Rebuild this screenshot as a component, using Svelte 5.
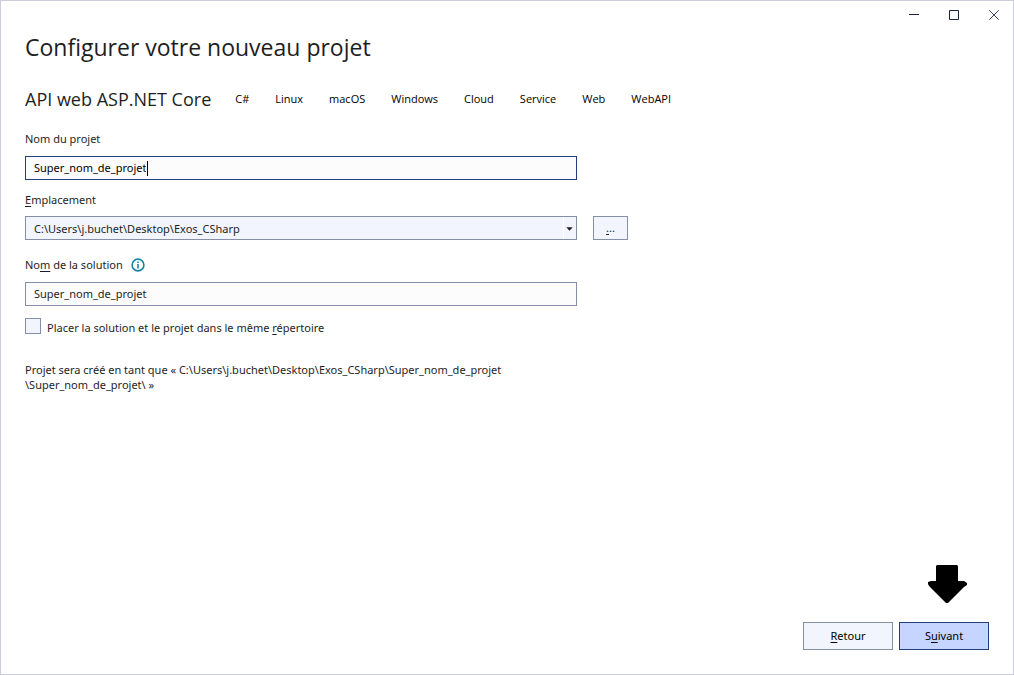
<script>
  const tags = ['C#', 'Linux', 'macOS', 'Windows', 'Cloud', 'Service', 'Web', 'WebAPI'];
  const location = 'C:\\Users\\j.buchet\\Desktop\\Exos_CSharp';
  let projectName = $state('Super_nom_de_projet');
  let solutionName = $state('Super_nom_de_projet');
  let sameDirectory = $state(false);
</script>

<div class="window">
  <header class="titlebar">
    <button type="button" aria-label="Réduire">
      <svg width="12" height="12" viewBox="-1 0 12 12"><path d="M0 5.5H10" /></svg>
    </button>
    <button type="button" aria-label="Agrandir">
      <svg width="12" height="12" viewBox="-1 0 12 12"><path d="M0.5 1.5H9.5V10.5H0.5Z" /></svg>
    </button>
    <button type="button" aria-label="Fermer">
      <svg class="close" width="12" height="12" viewBox="-1 0 12 12"><path d="M0.2 1.2L9.8 10.8M9.8 1.2L0.2 10.8" /></svg>
    </button>
  </header>

  <main>
    <h1>Configurer votre nouveau projet</h1>

    <div class="template">
      <h2>API web ASP.NET Core</h2>
      <ul>
        {#each tags as tag}
          <li>{tag}</li>
        {/each}
      </ul>
    </div>

    <form>
      <label class="caption" for="project">Nom du projet</label>
      <div class="box active">
        <input id="project" class="grow" type="text" spellcheck="false" bind:value={projectName} />
        <span class="caret"></span>
      </div>

      <label class="caption second" for="location"><u>E</u>mplacement</label>
      <div class="row">
        <div class="combo">
          <select id="location">
            <option>{location}</option>
          </select>
          <svg class="chevron" width="7" height="4" viewBox="0 0 7 4"><path d="M0.3 0.3H6.7L3.5 3.7Z" /></svg>
        </div>
        <button type="button" class="browse" aria-label="Parcourir"><u>.</u>..</button>
      </div>

      <div class="caption third">
        <label for="solution">No<u>m</u> de la solution</label>
        <svg class="info" width="14" height="14" viewBox="0 0 14 14">
          <circle cx="7" cy="7" r="5.9" />
          <path d="M7 6V10.6M7 3.4V5" />
        </svg>
      </div>
      <div class="box">
        <input id="solution" type="text" spellcheck="false" bind:value={solutionName} />
      </div>

      <label class="check">
        <input type="checkbox" bind:checked={sameDirectory} />
        <span>Placer la solution et le projet dans le même <u>r</u>épertoire</span>
      </label>

      <p>Projet sera créé en tant que « {location}\{projectName}<wbr />\{solutionName}\ »</p>
    </form>
  </main>

  <footer>
    <svg class="arrow" width="40" height="40" viewBox="0 0 40 40">
      <path d="M10 1H30L31 2V17H37L40 19V21L37 23L21 39H19L2 22L1 20V18L4 17H9V2Z" />
    </svg>
    <div class="actions">
      <button type="button"><u>R</u>etour</button>
      <button type="button" class="primary">S<u>u</u>ivant</button>
    </div>
  </footer>
</div>

<style>
  :global(body) {
    margin: 0;
    background: #fff;
  }

  .window,
  .window * {
    box-sizing: border-box;
  }

  .window {
    display: flex;
    flex-direction: column;
    min-height: 100vh;
    border: 1px solid #ccccdc;
    background: #fff;
    color: #1e1e1e;
    font: 11px/16px "Noto Sans", "Open Sans", sans-serif;
  }

  button,
  input,
  select {
    font: inherit;
    color: inherit;
    margin: 0;
    padding: 0;
  }

  u {
    text-decoration-thickness: 1px;
    text-underline-offset: 2px;
    text-decoration-skip-ink: none;
  }

  .titlebar {
    display: flex;
    justify-content: flex-end;
  }

  .titlebar button {
    display: flex;
    align-items: center;
    justify-content: center;
    width: 40px;
    height: 28px;
    border: 0;
    background: none;
  }

  .titlebar svg {
    fill: none;
    stroke: #17233f;
    overflow: visible;
    margin-left: 2px;
  }

  .titlebar .close {
    stroke: #3c465c;
  }

  main {
    flex: 1;
    padding: 0 24px;
  }

  h1,
  h2,
  ul,
  p {
    margin: 0;
    font-weight: 400;
  }

  h1,
  .template {
    font-family: "Open Sans", "Noto Sans", sans-serif;
  }

  h1 {
    padding-top: 2px;
    font-size: 23px;
    line-height: 32px;
  }

  .template {
    display: flex;
    align-items: center;
    gap: 24px;
    padding-top: 24px;
  }

  h2 {
    font-size: 18px;
    line-height: 24px;
  }

  ul {
    display: flex;
    gap: 26px;
    padding: 0;
    list-style: none;
    color: #000;
  }

  form {
    max-width: 603px;
    padding-top: 20px;
  }

  .caption {
    display: flex;
    align-items: center;
    gap: 8px;
    padding-bottom: 9px;
  }

  .caption.second {
    display: block;
    padding-top: 12px;
    padding-bottom: 8px;
  }

  .third {
    padding-top: 17px;
  }

  .third label {
    display: block;
  }

  .info {
    fill: none;
    stroke: #1387a8;
    stroke-width: 1.6;
  }

  .box,
  p {
    width: calc(100% - 51px);
  }

  .box {
    display: flex;
    align-items: center;
    height: 24px;
    padding: 0 8px;
    border: 1px solid #868fa8;
    background: #fcfcfc;
  }

  .box.active {
    border-color: #233f7b;
    color: #000;
  }

  .box input {
    flex: 1;
    min-width: 0;
    height: 20px;
    padding-bottom: 2px;
    border: 0;
    outline: 0;
    background: none;
  }

  .box .grow {
    flex: none;
    field-sizing: content;
  }

  .caret {
    width: 1px;
    height: 15px;
    margin-left: 1px;
    background: #000;
  }

  .row {
    display: flex;
    gap: 16px;
  }

  .combo {
    position: relative;
    flex: 1;
  }

  select {
    display: block;
    width: 100%;
    height: 24px;
    padding: 2px 20px 0 8px;
    border: 1px solid #868fa8;
    border-radius: 0;
    background: linear-gradient(#fff, #fff) right 12px top / 1px 100% no-repeat #f2f5fd;
    appearance: none;
  }

  .chevron {
    position: absolute;
    right: 4px;
    top: 11px;
    fill: #1e1e1e;
    pointer-events: none;
  }

  .browse,
  .actions button {
    border: 1px solid #868fa8;
    border-radius: 0;
    background: #f2f5fd;
  }

  .browse {
    width: 35px;
    height: 24px;
  }

  .check {
    display: flex;
    gap: 6px;
    padding-top: 12px;
  }

  .check input {
    width: 16px;
    height: 16px;
    border: 1px solid #868fa8;
    background: #f2f5fd;
    appearance: none;
  }

  .check input:checked {
    background: #233f7b;
  }

  .check span {
    padding-top: 2px;
  }

  p {
    padding-top: 26px;
    line-height: 15px;
  }

  footer {
    display: flex;
    flex-direction: column;
    align-items: flex-end;
    gap: 18px;
    padding: 0 24px 24px;
  }

  .arrow {
    margin-right: 22px;
    fill: #000;
  }

  .actions {
    display: flex;
    gap: 6px;
  }

  .actions button {
    width: 90px;
    height: 28px;
    color: #000;
  }

  .actions .primary {
    border-color: #233f7b;
    background: #c5d5ff;
  }
</style>
